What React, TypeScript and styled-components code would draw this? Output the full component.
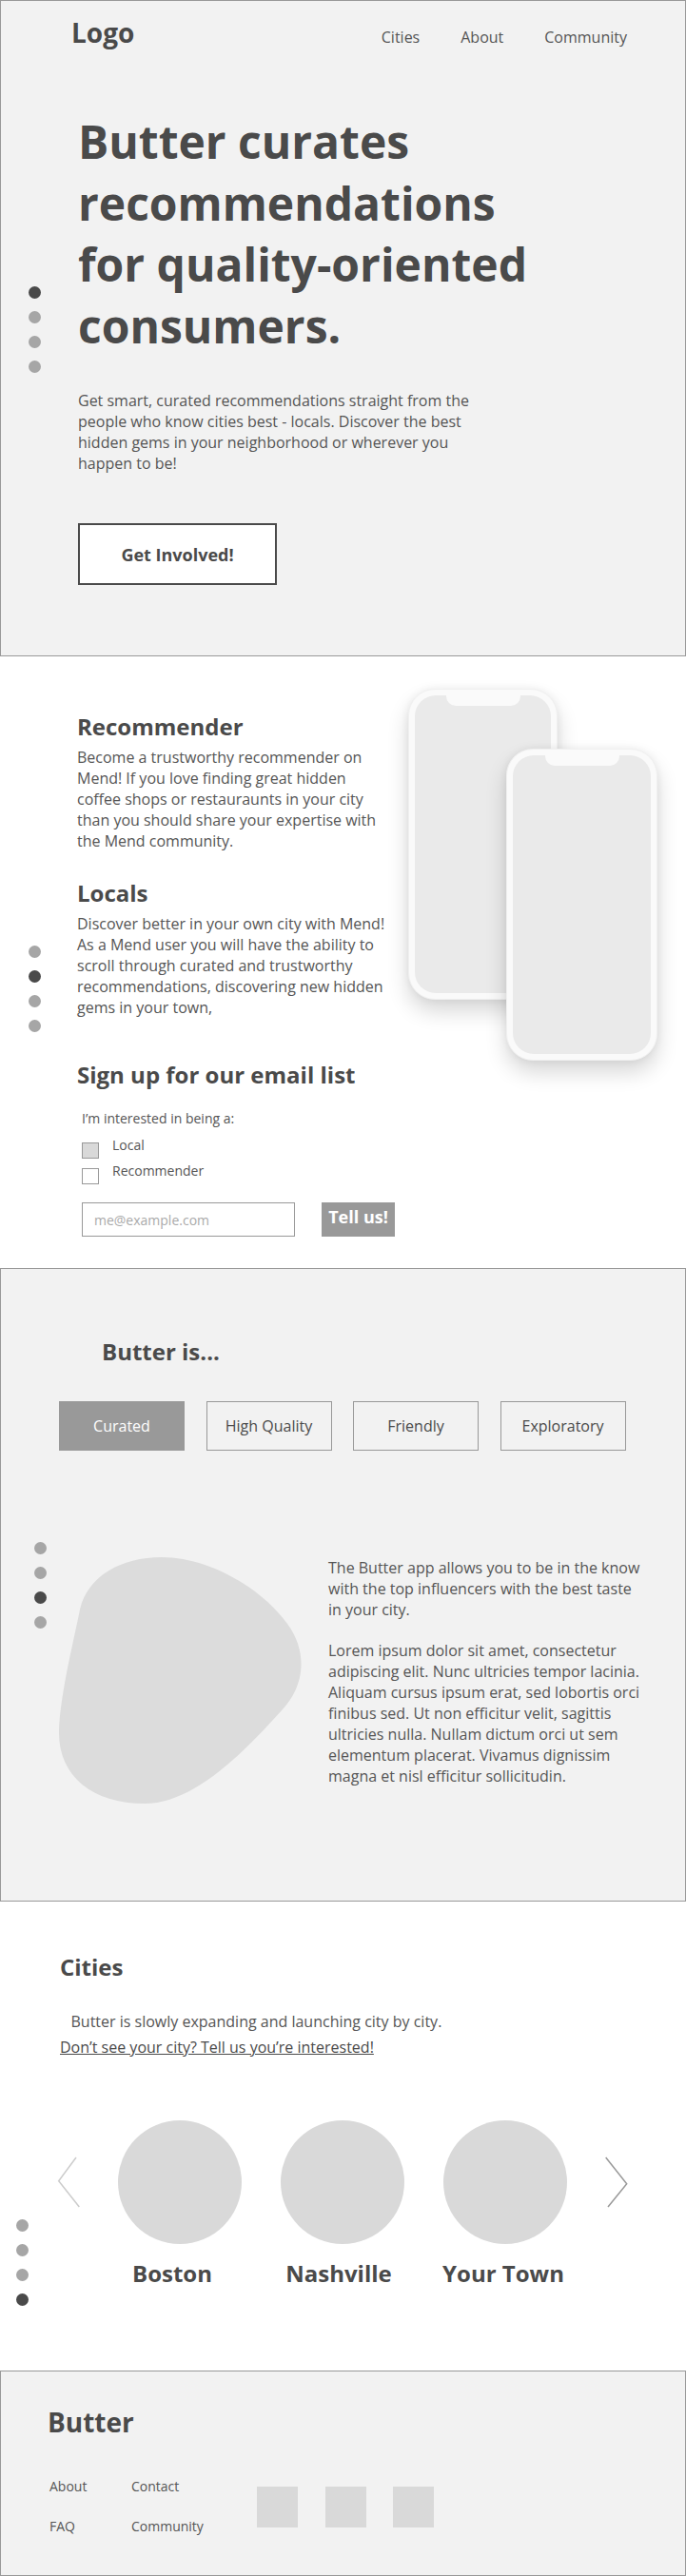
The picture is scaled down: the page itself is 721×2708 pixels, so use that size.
import styled, { createGlobalStyle } from 'styled-components';

const GlobalStyle = createGlobalStyle`
  * {
    box-sizing: border-box;
  }
  body {
    margin: 0;
    background: #ffffff;
    font-family: 'Open Sans', 'Noto Sans', sans-serif;
    color: #4a4a4a;
  }
  p, h1, h2, h3 {
    margin: 0;
  }
`;

const navLinks = ['Cities', 'About', 'Community'];
const traits = ['Curated', 'High Quality', 'Friendly', 'Exploratory'];
const cities = [
  { name: 'Boston', shift: 8 },
  { name: 'Nashville', shift: 4 },
  { name: 'Your Town', shift: 2 },
];
const footerLinks = ['About', 'Contact', 'FAQ', 'Community'];

function Dots({ active, left, top }: { active: number; left: number; top: number }) {
  return (
    <DotColumn $left={left} $top={top}>
      {[0, 1, 2, 3].map((i) => (
        <Dot key={i} $active={i === active} />
      ))}
    </DotColumn>
  );
}

function Phone({ offset }: { offset?: boolean }) {
  return (
    <PhoneFrame $offset={offset}>
      <Screen>
        <Notch />
      </Screen>
    </PhoneFrame>
  );
}

function App() {
  return (
    <Page>
      <GlobalStyle />

      <Hero>
        <Header>
          <Logo>Logo</Logo>
          <Nav>
            {navLinks.map((link) => (
              <NavLink key={link}>{link}</NavLink>
            ))}
          </Nav>
        </Header>
        <HeroBody>
          <HeroTitle>Butter curates recommendations for quality-oriented consumers.</HeroTitle>
          <HeroText>
            Get smart, curated recommendations straight from the people who know cities best -
            locals. Discover the best hidden gems in your neighborhood or wherever you happen to be!
          </HeroText>
          <OutlineButton>Get Involved!</OutlineButton>
        </HeroBody>
        <Dots active={0} left={28.5} top={299.5} />
      </Hero>

      <Features>
        <FeatureColumn>
          <SectionTitle>Recommender</SectionTitle>
          <BodyText>
            Become a trustworthy recommender on Mend! If you love finding great hidden coffee shops
            or restauraunts in your city than you should share your expertise with the Mend
            community.
          </BodyText>
          <SectionTitle $gap={28}>Locals</SectionTitle>
          <BodyText>
            Discover better in your own city with Mend! As a Mend user you will have the ability to
            scroll through curated and trustworthy recommendations, discovering new hidden gems in
            your town,
          </BodyText>
          <SectionTitle $gap={44}>Sign up for our email list</SectionTitle>
          <SignupForm>
            <FormLabel>I’m interested in being a:</FormLabel>
            <CheckRow>
              <CheckBox $checked />
              <CheckLabel>Local</CheckLabel>
            </CheckRow>
            <CheckRow>
              <CheckBox />
              <CheckLabel>Recommender</CheckLabel>
            </CheckRow>
            <EmailRow>
              <EmailInput placeholder="me@example.com" />
              <SubmitButton>Tell us!</SubmitButton>
            </EmailRow>
          </SignupForm>
        </FeatureColumn>
        <PhoneGroup>
          <Phone />
          <Phone offset />
        </PhoneGroup>
        <Dots active={1} left={29.5} top={303.5} />
      </Features>

      <About>
        <AboutTitle>Butter is...</AboutTitle>
        <TraitRow>
          {traits.map((trait, i) => (
            <TraitButton key={trait} $active={i === 0}>
              {trait}
            </TraitButton>
          ))}
        </TraitRow>
        <AboutBody>
          <Blob width="255" height="259" viewBox="0 0 255 259">
            <path
              d="M108,0 C160,0 215,35 240,70 C262,100 258,135 235,160 C190,210 140,259 90,259 C35,259 0,230 0,185 C0,150 15,90 22,55 C30,20 65,0 108,0 Z"
              fill="#dcdcdc"
            />
          </Blob>
          <AboutText>
            <BodyText>
              The Butter app allows you to be in the know with the top influencers with the best
              taste in your city.
            </BodyText>
            <BodyText>
              Lorem ipsum dolor sit amet, consectetur adipiscing elit. Nunc ultricies tempor
              lacinia. Aliquam cursus ipsum erat, sed lobortis orci finibus sed. Ut non efficitur
              velit, sagittis ultricies nulla. Nullam dictum orci ut sem elementum placerat. Vivamus
              dignissim magna et nisl efficitur sollicitudin.
            </BodyText>
          </AboutText>
        </AboutBody>
        <Dots active={2} left={34.5} top={286.5} />
      </About>

      <Cities>
        <SectionTitle>Cities</SectionTitle>
        <CitiesIntro>Butter is slowly expanding and launching city by city.</CitiesIntro>
        <CitiesLink href="#">Don’t see your city? Tell us you’re interested!</CitiesLink>
        <Carousel>
          <Arrow width="26" height="56" viewBox="0 0 26 56">
            <polyline points="20,2 1.7,26.7 23.3,54" fill="none" stroke="#cccccc" strokeWidth="1.5" />
          </Arrow>
          <CityList>
            {cities.map((city) => (
              <CityCard key={city.name}>
                <CityImage />
                <CityName $shift={city.shift}>{city.name}</CityName>
              </CityCard>
            ))}
          </CityList>
          <Arrow width="26" height="56" viewBox="0 0 26 56">
            <polyline points="2.7,2 24.7,29.7 5,54" fill="none" stroke="#999999" strokeWidth="1.5" />
          </Arrow>
        </Carousel>
        <Dots active={3} left={17} top={333.5} />
      </Cities>

      <Footer>
        <FooterTitle>Butter</FooterTitle>
        <FooterRow>
          <FooterLinks>
            {footerLinks.map((link) => (
              <FooterLink key={link}>{link}</FooterLink>
            ))}
          </FooterLinks>
          <SocialRow>
            <SocialIcon />
            <SocialIcon />
            <SocialIcon />
          </SocialRow>
        </FooterRow>
      </Footer>
    </Page>
  );
}

const Page = styled.div`
  width: 721px;
`;

const DotColumn = styled.div<{ $left: number; $top: number }>`
  position: absolute;
  left: ${(p) => p.$left}px;
  top: ${(p) => p.$top}px;
  display: flex;
  flex-direction: column;
  gap: 13px;
`;

const Dot = styled.span<{ $active?: boolean }>`
  display: block;
  width: 13px;
  height: 13px;
  border-radius: 50%;
  background: ${(p) => (p.$active ? '#4a4a4a' : '#a6a6a6')};
`;

/* hero */

const Hero = styled.section`
  position: relative;
  height: 690px;
  background: #f2f2f2;
  border: 1px solid #999999;
`;

const Header = styled.header`
  display: flex;
  justify-content: space-between;
  align-items: baseline;
  padding: 14px 61px 0 74px;
`;

const Logo = styled.div`
  font-size: 28px;
  font-weight: 700;
  line-height: 38px;
  color: #4a4a4a;
`;

const Nav = styled.nav`
  display: flex;
  gap: 43px;
`;

const NavLink = styled.a`
  font-size: 16px;
  line-height: 22px;
  color: #555555;
`;

const HeroBody = styled.div`
  display: flex;
  flex-direction: column;
  align-items: flex-start;
  padding-left: 81px;
`;

const HeroTitle = styled.h1`
  margin-top: 64px;
  max-width: 520px;
  font-size: 48px;
  font-weight: 700;
  line-height: 64.5px;
  color: #4a4a4a;
`;

const HeroText = styled.p`
  margin-top: 35px;
  width: 440px;
  font-size: 16px;
  line-height: 22px;
  color: #555555;
`;

const OutlineButton = styled.button`
  margin-top: 52px;
  width: 209px;
  height: 65px;
  border: 2px solid #4a4a4a;
  background: #ffffff;
  font-family: inherit;
  font-size: 18px;
  font-weight: 700;
  color: #4a4a4a;
`;

/* features */

const Features = styled.section`
  position: relative;
  display: flex;
  align-items: flex-start;
  gap: 22px;
  height: 643px;
  padding: 34px 0 0 81px;
  background: #ffffff;
`;

const FeatureColumn = styled.div`
  display: flex;
  flex-direction: column;
  width: 326px;
  padding-top: 24px;
`;

const SectionTitle = styled.h2<{ $gap?: number }>`
  margin-top: ${(p) => p.$gap ?? 0}px;
  font-size: 24px;
  font-weight: 700;
  line-height: 32px;
  color: #4a4a4a;
`;

const BodyText = styled.p`
  margin-top: 5px;
  font-size: 16px;
  line-height: 22px;
  color: #555555;
`;

const SignupForm = styled.div`
  display: flex;
  flex-direction: column;
  padding-left: 5px;
`;

const FormLabel = styled.div`
  margin-top: 20px;
  margin-bottom: 8px;
  font-size: 14px;
  line-height: 20px;
  color: #555555;
`;

const CheckRow = styled.label`
  display: flex;
  align-items: flex-start;
  gap: 14px;
  height: 24px;
  margin-bottom: 3px;
`;

const CheckBox = styled.span<{ $checked?: boolean }>`
  display: block;
  width: 18px;
  height: 17px;
  margin-top: 7px;
  border: 1px solid #999999;
  background: ${(p) => (p.$checked ? '#d9d9d9' : '#ffffff')};
`;

const CheckLabel = styled.span`
  font-size: 14px;
  line-height: 20px;
  color: #555555;
`;

const EmailRow = styled.div`
  display: flex;
  gap: 28px;
  margin-top: 16px;

  & > * {
    flex-shrink: 0;
  }
`;

const EmailInput = styled.input`
  width: 224px;
  height: 36px;
  padding: 0 12px;
  border: 1px solid #999999;
  background: #ffffff;
  font-family: inherit;
  font-size: 14px;
  color: #555555;
  outline: none;

  &::placeholder {
    color: #aaaaaa;
  }
`;

const SubmitButton = styled.button`
  display: flex;
  justify-content: center;
  width: 77px;
  height: 36px;
  padding: 0;
  border: none;
  background: #999999;
  font-family: inherit;
  font-size: 18px;
  font-weight: 700;
  line-height: 30px;
  color: #ffffff;
`;

const PhoneGroup = styled.div`
  position: relative;
  width: 262px;
  height: 391px;
`;

const PhoneFrame = styled.div<{ $offset?: boolean }>`
  position: ${(p) => (p.$offset ? 'absolute' : 'relative')};
  left: ${(p) => (p.$offset ? '103px' : '0')};
  top: ${(p) => (p.$offset ? '63px' : '0')};
  display: flex;
  width: ${(p) => (p.$offset ? '159px' : '157px')};
  height: ${(p) => (p.$offset ? '328px' : '327px')};
  padding: 6px;
  border-radius: 28px;
  border: 1px solid #f0f0f0;
  background: #fafafa;
  box-shadow: 0 12px 22px rgba(0, 0, 0, 0.16), 0 0 8px rgba(0, 0, 0, 0.06);
`;

const Screen = styled.div`
  position: relative;
  flex: 1;
  border-radius: 22px;
  background: #eaeaea;
`;

const Notch = styled.div`
  position: absolute;
  top: 0;
  left: 50%;
  width: 78px;
  height: 11px;
  margin-left: -39px;
  border-radius: 0 0 10px 10px;
  background: #fafafa;
`;

/* about */

const About = styled.section`
  position: relative;
  display: flex;
  flex-direction: column;
  height: 666px;
  padding: 71px 0 0 61px;
  background: #f2f2f2;
  border: 1px solid #999999;
`;

const AboutTitle = styled.h2`
  margin-left: 45px;
  font-size: 24px;
  font-weight: 700;
  line-height: 32px;
  color: #4a4a4a;
`;

const TraitRow = styled.div`
  display: flex;
  gap: 22.5px;
  margin-top: 36px;
`;

const TraitButton = styled.button<{ $active?: boolean }>`
  width: 132px;
  height: 52px;
  border: 1px solid #999999;
  background: ${(p) => (p.$active ? '#999999' : 'transparent')};
  font-family: inherit;
  font-size: 16px;
  color: ${(p) => (p.$active ? '#ffffff' : '#4a4a4a')};
`;

const AboutBody = styled.div`
  display: flex;
  align-items: flex-start;
  gap: 28px;
  margin-top: 112px;
`;

const Blob = styled.svg`
  display: block;
  flex-shrink: 0;
`;

const AboutText = styled.div`
  display: flex;
  flex-direction: column;
  gap: 21px;
  width: 332px;

  & > p {
    margin-top: 0;
  }
`;

/* cities */

const Cities = styled.section`
  position: relative;
  display: flex;
  flex-direction: column;
  align-items: flex-start;
  height: 493px;
  padding: 53px 0 0 63px;
  background: #ffffff;
`;

const CitiesIntro = styled.p`
  margin-top: 30px;
  padding-left: 11.5px;
  font-size: 16px;
  line-height: 22px;
  color: #555555;
`;

const CitiesLink = styled.a`
  margin-top: 5px;
  font-size: 16px;
  line-height: 22px;
  color: #4a4a4a;
  text-decoration: underline;
`;

const Carousel = styled.div`
  display: flex;
  align-items: flex-start;
  gap: 38px;
  margin: 66px 0 0 -3px;
`;

const Arrow = styled.svg`
  display: block;
  margin-top: 37px;
`;

const CityList = styled.div`
  display: flex;
  gap: 41px;
`;

const CityCard = styled.div`
  display: flex;
  flex-direction: column;
  align-items: center;
  width: 130px;
`;

const CityImage = styled.div`
  width: 130px;
  height: 130px;
  border-radius: 50%;
  background: #d9d9d9;
`;

const CityName = styled.div<{ $shift: number }>`
  margin-top: 15px;
  margin-right: ${(p) => p.$shift * 2}px;
  font-size: 24px;
  font-weight: 700;
  line-height: 32px;
  white-space: nowrap;
  color: #4a4a4a;
`;

/* footer */

const Footer = styled.footer`
  height: 216px;
  padding: 34px 0 0 49px;
  background: #f2f2f2;
  border: 1px solid #999999;
`;

const FooterTitle = styled.div`
  font-size: 28px;
  font-weight: 700;
  line-height: 38px;
  color: #4a4a4a;
`;

const FooterRow = styled.div`
  display: flex;
  align-items: flex-start;
  margin: 39px 0 0 2px;
`;

const FooterLinks = styled.div`
  display: grid;
  grid-template-columns: 86px 132px;
  row-gap: 22px;
`;

const FooterLink = styled.a`
  font-size: 14px;
  line-height: 20px;
  color: #555555;
`;

const SocialRow = styled.div`
  display: flex;
  gap: 28.5px;
  margin-top: 10px;
`;

const SocialIcon = styled.div`
  width: 43px;
  height: 43px;
  background: #d9d9d9;
`;

export default App;
